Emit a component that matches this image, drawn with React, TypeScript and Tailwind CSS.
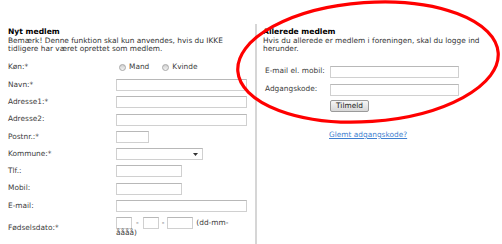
import React from "react";

const font = "font-['DejaVu_Sans',Verdana,sans-serif]";

const Field = ({ w }: { w: string }) => (
  <input
    type="text"
    className={`h-[12px] ${w} border border-[#d0d0d0] border-t-[#b8b8b8] bg-white`}
  />
);

const Row = ({ label, children }: { label: string; children: React.ReactNode }) => (
  <div className="flex items-center h-[17.25px]">
    <div className="w-[108px] text-[#3c3c3c]">{label}</div>
    <div className="flex items-center">{children}</div>
  </div>
);

const Radio = ({ label }: { label: string }) => (
  <label className="flex items-center gap-[3px] mr-[13px]">
    <span className="w-[7px] h-[7px] rounded-full border border-[#a8a8a8] bg-gradient-to-b from-[#cfcfcf] to-[#f4f4f4]" />
    <span className="text-[#3c3c3c]">{label}</span>
  </label>
);

export default function App() {
  return (
    <div className={`relative w-[502px] h-[244px] bg-white overflow-hidden ${font} text-[7.4px] leading-[8.5px] text-[#222]`}>
      <div className="flex pt-[24px] h-full">
        {/* Nyt medlem */}
        <div className="w-[255px] pl-[8px] pt-[4px]">
          <div className="font-bold text-black text-[7.6px]">Nyt medlem</div>
          <p className="text-[#333] w-[230px]">
            Bemærk! Denne funktion skal kun anvendes, hvis du IKKE tidligere har været oprettet som medlem.
          </p>

          <div className="mt-[7px]">
            <div className="flex items-center h-[14px]">
              <div className="w-[111px] text-[#3c3c3c]">Køn:*</div>
              <Radio label="Mand" />
              <Radio label="Kvinde" />
            </div>
            <div className="mt-[2px]">
              <Row label="Navn:*"><Field w="w-[131px]" /></Row>
              <Row label="Adresse1:*"><Field w="w-[131px]" /></Row>
              <Row label="Adresse2:"><Field w="w-[131px]" /></Row>
              <Row label="Postnr.:*"><Field w="w-[33px]" /></Row>
              <Row label="Kommune:*">
                <div className="relative h-[12px] w-[87px] border border-[#d0d0d0] border-t-[#b8b8b8] bg-white">
                  <svg className="absolute right-[4px] top-[4px]" width="5" height="3" viewBox="0 0 5 3">
                    <path d="M0 0h5L2.5 3z" fill="#333" />
                  </svg>
                </div>
              </Row>
              <Row label="Tlf.:"><Field w="w-[66px]" /></Row>
              <Row label="Mobil:"><Field w="w-[66px]" /></Row>
              <Row label="E-mail:"><Field w="w-[131px]" /></Row>
              <div className="flex items-start pt-[2.5px]">
                <div className="w-[108px] text-[#3c3c3c] pt-[7px]">Fødselsdato:*</div>
                <div className="w-[118px]">
                  <div className="flex items-center">
                    <Field w="w-[16px]" />
                    <span className="mx-[4px] text-[#3c3c3c]">-</span>
                    <Field w="w-[16px]" />
                    <span className="mx-[3px] text-[#3c3c3c]">-</span>
                    <Field w="w-[26px]" />
                    <span className="ml-[3px] text-[#3c3c3c]">(dd-mm-</span>
                  </div>
                  <div className="text-[#3c3c3c]">åååå)</div>
                </div>
              </div>
            </div>
          </div>
        </div>

        {/* Allerede medlem */}
        <div className="flex-1 border-l-2 border-[#d6d6d6] pl-[6px] pt-[4px]">
          <div className="font-bold text-black text-[7.6px]">Allerede medlem</div>
          <p className="text-[#333] w-[228px]">
            Hvis du allerede er medlem i foreningen, skal du logge ind herunder.
          </p>

          <div className="mt-[9px] pl-[2px]">
            <div className="flex items-center h-[18px]">
              <div className="w-[65px] text-[#3c3c3c]">E-mail el. mobil:</div>
              <Field w="w-[129px]" />
            </div>
            <div className="flex items-center h-[18px]">
              <div className="w-[65px] text-[#3c3c3c]">Adgangskode:</div>
              <Field w="w-[129px]" />
            </div>
            <div className="pl-[65px] pt-[1.5px]">
              <button className="h-[12px] w-[39px] border border-[#9a9a9a] rounded-[2px] bg-gradient-to-b from-[#f6f6f6] to-[#d8d8d8] text-[#222] leading-[10px]">
                Tilmeld
              </button>
            </div>
            <div className="pl-[64px] mt-[19px]">
              <a href="#" className="text-[#3f7fd0] underline">Glemt adgangskode?</a>
            </div>
          </div>
        </div>
      </div>

      {/* red annotation ring */}
      <svg className="absolute inset-0 pointer-events-none" width="502" height="244" viewBox="0 0 502 244">
        <ellipse cx="368" cy="62" rx="130.5" ry="59.5" transform="rotate(-4 368 62)" fill="none" stroke="#f00" strokeWidth="3.2" />
      </svg>
    </div>
  );
}
